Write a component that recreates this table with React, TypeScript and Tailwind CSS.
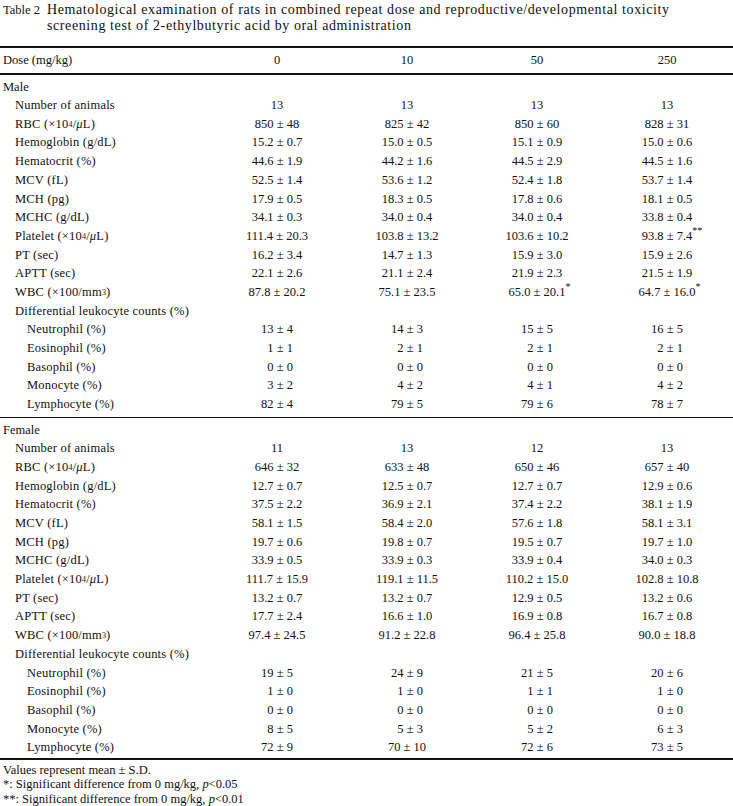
import React from "react";

type Row = { label: React.ReactNode; values?: React.ReactNode[]; indent?: number };

const Sup = ({ children }: { children: React.ReactNode }) => (
  <sup className="text-[8px] relative -top-[1px]">{children}</sup>
);

const UL = () => (
  <>
    <span className="italic">μ</span>L
  </>
);

const Star = ({ n }: { n: number }) => (
  <span className="absolute left-full top-[-3px] text-[10px]">{n === 1 ? "*" : "**"}</span>
);

// number with trailing significance mark, kept centred on the number itself
const Sig = ({ v, n }: { v: string; n: number }) => (
  <span className="relative">
    {v}
    <Star n={n} />
  </span>
);

// pad single digit leukocyte values so the ± lines up
const Pad = ({ v }: { v: string }) =>
  v.split(" ")[0].length === 1 ? (
    <span>
      <span className="invisible">0</span>
      {v}
    </span>
  ) : (
    <span>{v}</span>
  );

function sectionRows(d: {
  n: string[];
  rbc: string[];
  hgb: string[];
  hct: string[];
  mcv: string[];
  mch: string[];
  mchc: string[];
  plt: React.ReactNode[];
  pt: string[];
  aptt: string[];
  wbc: React.ReactNode[];
  neu: string[];
  eos: string[];
  bas: string[];
  mon: string[];
  lym: string[];
}): Row[] {
  const pad = (a: string[]) => a.map((v, i) => <Pad key={i} v={v} />);
  return [
    { label: "Number of animals", values: d.n, indent: 1 },
    {
      label: (
        <>
          RBC (×10<Sup>4</Sup>/<UL />)
        </>
      ),
      values: d.rbc,
      indent: 1,
    },
    { label: "Hemoglobin (g/dL)", values: d.hgb, indent: 1 },
    { label: "Hematocrit (%)", values: d.hct, indent: 1 },
    { label: "MCV (fL)", values: d.mcv, indent: 1 },
    { label: "MCH (pg)", values: d.mch, indent: 1 },
    { label: "MCHC (g/dL)", values: d.mchc, indent: 1 },
    {
      label: (
        <>
          Platelet (×10<Sup>4</Sup>/<UL />)
        </>
      ),
      values: d.plt,
      indent: 1,
    },
    { label: "PT (sec)", values: d.pt, indent: 1 },
    { label: "APTT (sec)", values: d.aptt, indent: 1 },
    {
      label: (
        <>
          WBC (×100/mm<Sup>3</Sup>)
        </>
      ),
      values: d.wbc,
      indent: 1,
    },
    { label: "Differential leukocyte counts (%)", indent: 1 },
    { label: "Neutrophil (%)", values: pad(d.neu), indent: 2 },
    { label: "Eosinophil (%)", values: pad(d.eos), indent: 2 },
    { label: "Basophil (%)", values: pad(d.bas), indent: 2 },
    { label: "Monocyte (%)", values: pad(d.mon), indent: 2 },
    { label: "Lymphocyte (%)", values: pad(d.lym), indent: 2 },
  ];
}

const male = sectionRows({
  n: ["13", "13", "13", "13"],
  rbc: ["850 ± 48", "825 ± 42", "850 ± 60", "828 ± 31"],
  hgb: ["15.2 ± 0.7", "15.0 ± 0.5", "15.1 ± 0.9", "15.0 ± 0.6"],
  hct: ["44.6 ± 1.9", "44.2 ± 1.6", "44.5 ± 2.9", "44.5 ± 1.6"],
  mcv: ["52.5 ± 1.4", "53.6 ± 1.2", "52.4 ± 1.8", "53.7 ± 1.4"],
  mch: ["17.9 ± 0.5", "18.3 ± 0.5", "17.8 ± 0.6", "18.1 ± 0.5"],
  mchc: ["34.1 ± 0.3", "34.0 ± 0.4", "34.0 ± 0.4", "33.8 ± 0.4"],
  plt: ["111.4 ± 20.3", "103.8 ± 13.2", "103.6 ± 10.2", <Sig key="p" v="93.8 ± 7.4" n={2} />],
  pt: ["16.2 ± 3.4", "14.7 ± 1.3", "15.9 ± 3.0", "15.9 ± 2.6"],
  aptt: ["22.1 ± 2.6", "21.1 ± 2.4", "21.9 ± 2.3", "21.5 ± 1.9"],
  wbc: ["87.8 ± 20.2", "75.1 ± 23.5", <Sig key="a" v="65.0 ± 20.1" n={1} />, <Sig key="b" v="64.7 ± 16.0" n={1} />],
  neu: ["13 ± 4", "14 ± 3", "15 ± 5", "16 ± 5"],
  eos: ["1 ± 1", "2 ± 1", "2 ± 1", "2 ± 1"],
  bas: ["0 ± 0", "0 ± 0", "0 ± 0", "0 ± 0"],
  mon: ["3 ± 2", "4 ± 2", "4 ± 1", "4 ± 2"],
  lym: ["82 ± 4", "79 ± 5", "79 ± 6", "78 ± 7"],
});

const female = sectionRows({
  n: ["11", "13", "12", "13"],
  rbc: ["646 ± 32", "633 ± 48", "650 ± 46", "657 ± 40"],
  hgb: ["12.7 ± 0.7", "12.5 ± 0.7", "12.7 ± 0.7", "12.9 ± 0.6"],
  hct: ["37.5 ± 2.2", "36.9 ± 2.1", "37.4 ± 2.2", "38.1 ± 1.9"],
  mcv: ["58.1 ± 1.5", "58.4 ± 2.0", "57.6 ± 1.8", "58.1 ± 3.1"],
  mch: ["19.7 ± 0.6", "19.8 ± 0.7", "19.5 ± 0.7", "19.7 ± 1.0"],
  mchc: ["33.9 ± 0.5", "33.9 ± 0.3", "33.9 ± 0.4", "34.0 ± 0.3"],
  plt: ["111.7 ± 15.9", "119.1 ± 11.5", "110.2 ± 15.0", "102.8 ± 10.8"],
  pt: ["13.2 ± 0.7", "13.2 ± 0.7", "12.9 ± 0.5", "13.2 ± 0.6"],
  aptt: ["17.7 ± 2.4", "16.6 ± 1.0", "16.9 ± 0.8", "16.7 ± 0.8"],
  wbc: ["97.4 ± 24.5", "91.2 ± 22.8", "96.4 ± 25.8", "90.0 ± 18.8"],
  neu: ["19 ± 5", "24 ± 9", "21 ± 5", "20 ± 6"],
  eos: ["1 ± 0", "1 ± 0", "1 ± 1", "1 ± 0"],
  bas: ["0 ± 0", "0 ± 0", "0 ± 0", "0 ± 0"],
  mon: ["8 ± 5", "5 ± 3", "5 ± 2", "6 ± 3"],
  lym: ["72 ± 9", "70 ± 10", "72 ± 6", "73 ± 5"],
});

function DataRow({ row }: { row: Row }) {
  const pl = row.indent === 2 ? "pl-[27px]" : row.indent === 1 ? "pl-[15px]" : "pl-[3px]";
  return (
    <div className="grid grid-cols-[212px_130px_130px_130px_130px] h-[18.7px] items-center">
      <div className={`${pl} whitespace-nowrap tracking-[0.2px]`}>{row.label}</div>
      {(row.values ?? ["", "", "", ""]).map((v, i) => (
        <div key={i} className="text-center whitespace-nowrap">
          {v}
        </div>
      ))}
    </div>
  );
}

function Section({ title, rows }: { title: string; rows: Row[] }) {
  return (
    <div>
      <div className="mt-[4px] h-[17px] flex items-center pl-[3px]">{title}</div>
      {rows.map((r, i) => (
        <DataRow key={i} row={r} />
      ))}
    </div>
  );
}

export default function App() {
  return (
    <div
      className="w-[733px] h-[806px] bg-white text-[#111] text-[12.5px] leading-none overflow-hidden"
      style={{ fontFamily: '"Liberation Serif", "DejaVu Serif", serif' }}
    >
      {/* Caption */}
      <div className="flex pl-[3px] pt-[2px] text-[14px] leading-[16px] tracking-[0.6px]">
        <span className="shrink-0 mr-[7px] whitespace-nowrap tracking-normal text-[12.5px]">Table 2</span>
        <span className="whitespace-nowrap">
          Hematological examination of rats in combined repeat dose and reproductive/developmental toxicity
          <br />
          screening test of 2-ethylbutyric acid by oral administration
        </span>
      </div>

      <div className="mt-[12px] h-[2px] bg-[#111]" />
      <div className="grid grid-cols-[212px_130px_130px_130px_130px] h-[25px] items-center">
        <div className="pl-[3px]">Dose (mg/kg)</div>
        <div className="text-center">0</div>
        <div className="text-center">10</div>
        <div className="text-center">50</div>
        <div className="text-center">250</div>
      </div>
      <div className="h-[2px] bg-[#111]" />

      <Section title="Male" rows={male} />
      <div className="mt-[3px] h-[1.5px] bg-[#111]" />
      <Section title="Female" rows={female} />
      <div className="mt-[1px] h-[2px] bg-[#111]" />

      {/* Footnotes */}
      <div className="pl-[3px] pt-[3px] leading-[14.5px]">
        <div>Values represent mean ± S.D.</div>
        <div>
          *: Significant difference from 0 mg/kg, <span className="italic">p</span>&lt;0.05
        </div>
        <div>
          **: Significant difference from 0 mg/kg, <span className="italic">p</span>&lt;0.01
        </div>
      </div>
    </div>
  );
}
